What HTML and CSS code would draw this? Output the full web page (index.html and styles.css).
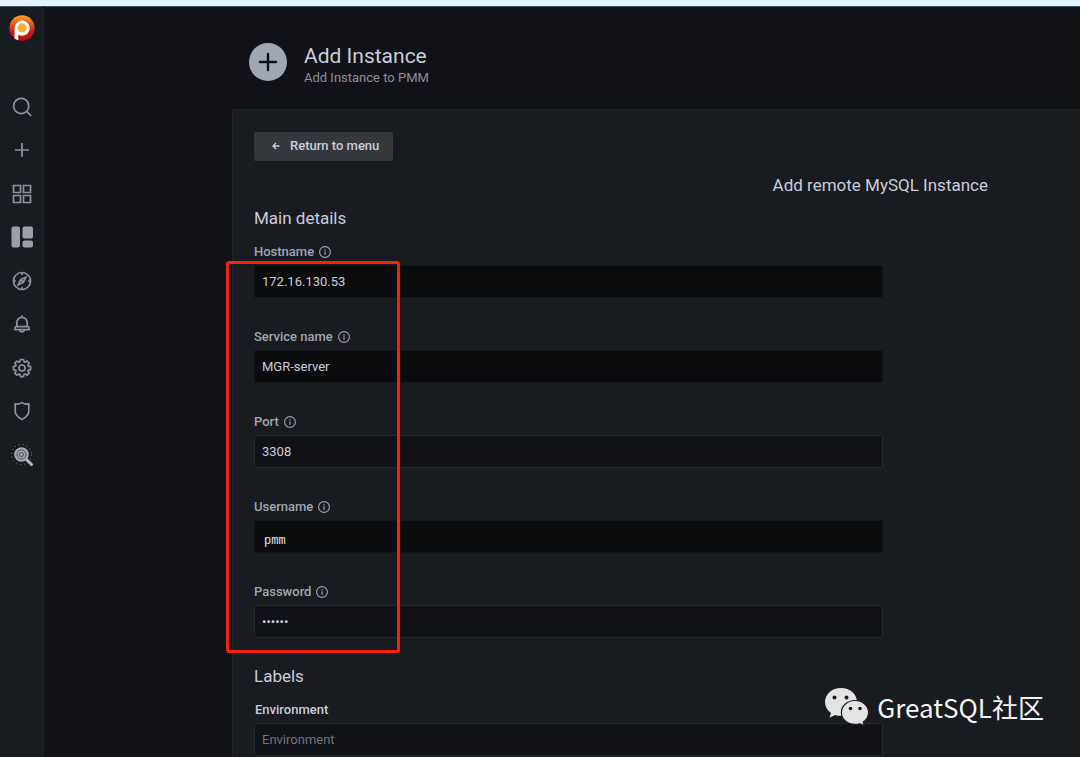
FILE: index.html
```
<!DOCTYPE html>
<html lang="en">
  <head>
    <meta charset="UTF-8">
    <meta name="viewport" content="width=device-width, initial-scale=1">
    <title>Add Instance</title>
    <link rel="stylesheet" href="styles.css">
  </head>
  <body>
    <svg class="sprite" width="0" height="0">
      <symbol id="info" viewBox="0 0 12 12">
        <circle cx="6" cy="6" r="5.4" fill="none" stroke="currentColor" stroke-width="1.1"/>
        <path d="M5.4 5.3h1.2v3.5h-1.2zM5.4 3.2h1.2v1.2h-1.2z" fill="currentColor"/>
      </symbol>
    </svg>
    <div class="app">
      <nav class="sidebar">
        <a class="logo" href="#" aria-label="Home">
          <svg width="26" height="26" viewBox="0 0 26 26">
            <defs>
              <linearGradient id="flame" x1="0" y1="0" x2="0" y2="1">
                <stop offset="0" stop-color="#f5a328"/>
                <stop offset=".35" stop-color="#e2571f"/>
                <stop offset=".65" stop-color="#c81a17"/>
                <stop offset="1" stop-color="#b91015"/>
              </linearGradient>
            </defs>
            <circle cx="13" cy="13" r="12.7" fill="url(#flame)"/>
            <path d="M5.500 23.500V13.200a7.600 7.600 0 1 1 3.800 6.600V25.100Q7 24.600 5.500 23.500z" fill="#fff"/>
            <circle cx="13.100" cy="12.900" r="4.600" fill="#fbb034"/>
          </svg>
        </a>
        <ul class="menu">
          <li><a href="#" aria-label="Search">
            <svg viewBox="0 0 24 24"><circle cx="11.200" cy="11" r="7.600"/><path d="M16.800 16.600l4.400 4.400"/></svg>
          </a></li>
          <li><a href="#" aria-label="Create">
            <svg viewBox="0 0 24 24"><path d="M12 5v14M5 12h14"/></svg>
          </a></li>
          <li><a href="#" aria-label="Dashboards">
            <svg viewBox="0 0 24 24"><path d="M3.500 3.500h7v7h-7zM13.500 3.500h7v7h-7zM3.500 13.500h7v7h-7zM13.500 13.500h7v7h-7z"/></svg>
          </a></li>
          <li><a href="#" aria-label="PMM dashboards">
            <svg viewBox="0 0 24 24"><g class="solid"><rect x="1.500" y="1.500" width="8.500" height="21" rx="2"/><rect x="12.500" y="1.500" width="10.500" height="12" rx="2"/><rect x="12.500" y="15.500" width="10.500" height="7" rx="2"/></g></svg>
          </a></li>
          <li><a href="#" aria-label="Explore">
            <svg viewBox="0 0 24 24"><circle cx="12" cy="12" r="8.500"/><path d="M12 3.500v2.500M12 18v2.500M3.500 12H6M18 12h2.500"/><path d="M15.800 8.200l-2.400 5.200-5.200 2.400 2.400-5.200zM10.600 10.600l2.800 2.800"/></svg>
          </a></li>
          <li><a href="#" aria-label="Alerting">
            <svg viewBox="0 0 24 24"><path d="M12 3.200v2M6.800 14.700v-4.200a5.200 5.200 0 0 1 10.400 0v4.200M6.300 14.700h11.400q1.300 0 1.300 1.300v1.600H5V16q0-1.300 1.300-1.300zM9.800 17.800a2.200 2.200 0 0 0 4.400 0"/></svg>
          </a></li>
          <li><a href="#" aria-label="Configuration">
            <svg viewBox="0 0 24 24"><circle cx="12" cy="12" r="3"/><path stroke-linejoin="round" d="M10.500 3.500h3l.6 2.300 1 .4 2-1.200 2.100 2.100-1.200 2 .4 1 2.200.5v3l-2.200.5-.4 1 1.200 2-2.100 2.100-2-1.200-1 .4-.6 2.200h-3l-.6-2.200-1-.4-2 1.200-2.100-2.100 1.200-2-.4-1-2.200-.5v-3l2.200-.5.4-1-1.200-2 2.100-2.100 2 1.200 1-.4z"/></svg>
          </a></li>
          <li><a href="#" aria-label="Server admin">
            <svg viewBox="0 0 24 24"><path d="M12 3.600c-2 1.400-4.200 1.800-6.800 1.300v7.200c0 3.800 2.800 6.300 6.800 8.500 4-2.200 6.800-4.700 6.800-8.500V4.900c-2.600.5-4.800.1-6.800-1.300z"/></svg>
          </a></li>
          <li><a href="#" aria-label="Advisor checks">
            <svg viewBox="0 0 24 24"><circle class="dots" cx="11.500" cy="11.500" r="10"/><circle class="lens" cx="11.500" cy="11.500" r="6.500"/><circle class="ring" cx="11.500" cy="11.500" r="4.500"/><circle class="ring" cx="11.500" cy="11.500" r="2"/><path class="handle" d="M17 17l4.500 4.500"/></svg>
          </a></li>
        </ul>
      </nav>

      <main class="content">
        <header class="page-header">
          <svg class="page-icon" width="38" height="38" viewBox="0 0 38 38">
            <circle cx="19" cy="19" r="19" fill="#9fa7b3"/>
            <path d="M19 11v16M11 19h16" stroke="#111217" stroke-width="2.400" stroke-linecap="round"/>
          </svg>
          <div class="page-title">
            <h1>Add Instance</h1>
            <p>Add Instance to PMM</p>
          </div>
        </header>

        <form class="panel">
          <button type="button" class="return">
            <svg width="8" height="8" viewBox="0 0 8 8"><path d="M7.500 4H1M4 1L1 4l3 3" fill="none" stroke="currentColor" stroke-width="1.300"/></svg>
            Return to menu
          </button>
          <h2 class="form-title">Add remote MySQL Instance</h2>

          <section class="details">
            <h2>Main details</h2>
            <div class="fields">
              <div class="field">
                <label for="hostname">Hostname <svg class="info"><use href="#info"/></svg></label>
                <input class="filled" type="text" id="hostname" name="hostname" value="172.16.130.53">
              </div>
              <div class="field">
                <label for="service">Service name <svg class="info"><use href="#info"/></svg></label>
                <input class="filled" type="text" id="service" name="service" value="MGR-server">
              </div>
              <div class="field">
                <label for="port">Port <svg class="info"><use href="#info"/></svg></label>
                <input type="text" id="port" name="port" value="3308">
              </div>
              <div class="field">
                <label for="username">Username <svg class="info"><use href="#info"/></svg></label>
                <input class="filled mono" type="text" id="username" name="username" value="pmm">
              </div>
              <div class="field">
                <label for="password">Password <svg class="info"><use href="#info"/></svg></label>
                <input type="password" id="password" name="password" value="secret">
              </div>
            </div>
            <div class="highlight"></div>
          </section>

          <section class="labels">
            <h2>Labels</h2>
            <div class="field">
              <label class="strong" for="environment">Environment</label>
              <input type="text" id="environment" name="environment" placeholder="Environment">
            </div>
          </section>
        </form>
      </main>

      <div class="watermark">
        <svg width="44" height="38" viewBox="0 0 44 38">
          <path fill="#e3e4e4" d="M16 0C7 0 0 6.200 0 14c0 4.500 2.300 8.400 6 11l-1.500 4.800 5.600-2.900c1.900.6 3.900.9 5.900.9 9 0 16-6.200 16-13.900S25 0 16 0z"/>
          <path fill="#e3e4e4" stroke="#1b1d21" stroke-width="1.200" d="M30 12.500c-7.600 0-13.600 5.300-13.600 12S22.400 36.400 30 36.400c1.700 0 3.300-.2 4.800-.7l4.700 2.200-1.300-3.900c3.300-2.200 5.400-5.600 5.400-9.500 0-6.700-6-12-13.600-12z"/>
          <g fill="#1b1d21"><circle cx="9.500" cy="9.500" r="2"/><circle cx="21.500" cy="9.500" r="2"/><circle cx="25.500" cy="20.500" r="1.800"/><circle cx="35" cy="20.500" r="1.800"/></g>
        </svg>
        <span>GreatSQL社区</span>
      </div>
    </div>
  </body>
</html>
```
FILE: styles.css
```
:root {
  --bg: #111217;
  --panel: #181b1f;
  --border: #25272c;
  --text: #ccccdc;
  --muted: #8e8f9b;
  --label: #9fa7b3;
}
* {
  box-sizing: border-box;
}
body {
  margin: 0;
  font-family: Roboto, "Liberation Sans", sans-serif;
  font-size: 13px;
  color: var(--text);
  background: var(--bg);
}
h1, h2, p, ul {
  margin: 0;
  padding: 0;
  font-weight: 400;
}
.sprite {
  position: absolute;
}
.app {
  position: relative;
  display: flex;
  height: 100vh;
  overflow: hidden;
  border-top: 6px solid #e4f4ff;
}

/* sidebar */
.sidebar {
  flex: none;
  width: 44px;
  padding-top: 9px;
  background: var(--panel);
  border-right: 1px solid #202227;
  box-shadow: inset 0 1px #3c5660;
}
.logo {
  display: block;
  height: 26px;
  margin: 0 0 54px 9px;
}
.menu {
  list-style: none;
}
.menu li {
  height: 24px;
  margin: 0 0 19px 10px;
}
.menu li:nth-child(even) {
  margin-bottom: 20px;
}
.menu svg {
  display: block;
  width: 24px;
  height: 24px;
  fill: none;
  stroke: #8f929e;
  stroke-width: 1.7;
}
.menu .solid {
  fill: #9c9eaa;
  stroke: none;
}
.menu .dots {
  stroke-width: 1;
  stroke-dasharray: 1 3;
}
.menu .lens {
  fill: #a3a8b4;
  stroke: #a3a8b4;
}
.menu .ring {
  stroke: #4a4d56;
  stroke-width: 1;
}
.menu .handle {
  stroke: #b4b9c4;
  stroke-width: 3;
  stroke-linecap: round;
}

/* page */
.content {
  flex: 1;
  min-width: 0;
  padding-left: 188px;
  box-shadow: inset 0 1px #3c5660;
}
.page-header {
  display: flex;
  align-items: center;
  gap: 17px;
  height: 103px;
  padding: 8px 0 0 17px;
}
.page-title {
  padding-top: 6px;
}
.page-header h1 {
  font-size: 21px;
  line-height: 26px;
}
.page-header p {
  line-height: 18px;
  color: var(--muted);
}
.panel {
  min-height: 700px;
  padding: 22px 22px 0 21px;
  background: var(--panel);
  border: 1px solid #202226;
  border-right: 0;
}
.panel h2 {
  font-size: 17px;
  line-height: 20px;
}
.return {
  display: flex;
  align-items: center;
  gap: 10px;
  height: 29px;
  padding: 0 14px 2px 18px;
  border: 0;
  border-radius: 2px;
  font: 500 13px Roboto, "Liberation Sans", sans-serif;
  color: var(--text);
  background: #34373b;
  cursor: pointer;
}
.panel .form-title {
  margin: 14px 70px 13px 0;
  text-align: right;
}
.details,
.labels {
  position: relative;
  max-width: 629px;
}
.details h2,
.labels h2 {
  margin-bottom: 15px;
}
.labels {
  margin-top: 28px;
}
.fields {
  display: flex;
  flex-direction: column;
  gap: 30px;
}
.field label {
  display: flex;
  align-items: center;
  gap: 5px;
  margin-bottom: 4px;
  font-weight: 500;
  line-height: 18px;
  color: var(--label);
}
.field label.strong {
  padding-left: 1px;
  color: var(--text);
}
.info {
  width: 12px;
  height: 12px;
}
.field input {
  display: block;
  width: 100%;
  height: 33px;
  padding: 0 7px;
  border: 1px solid var(--border);
  border-radius: 2px;
  font: 13px Roboto, "Liberation Sans", sans-serif;
  color: var(--text);
  background: var(--bg);
}
.field input::placeholder {
  color: #72747e;
}
.field input.filled {
  border-color: #131518;
  background: #0b0c0e;
}
.field input.mono {
  padding: 8px 9px 0;
  font: 12px "Liberation Mono", monospace;
  color: #e4e4e8;
}
.highlight {
  position: absolute;
  top: 53px;
  left: -28px;
  width: 174px;
  height: 392px;
  border: 3px solid #f9200f;
  border-radius: 3px;
}

.watermark {
  position: absolute;
  right: 36px;
  bottom: 31px;
  display: flex;
  align-items: center;
  gap: 8px;
  font-family: "Noto Sans CJK SC", sans-serif;
  font-size: 26px;
  line-height: 38px;
  color: #f4f4f4;
}
```
